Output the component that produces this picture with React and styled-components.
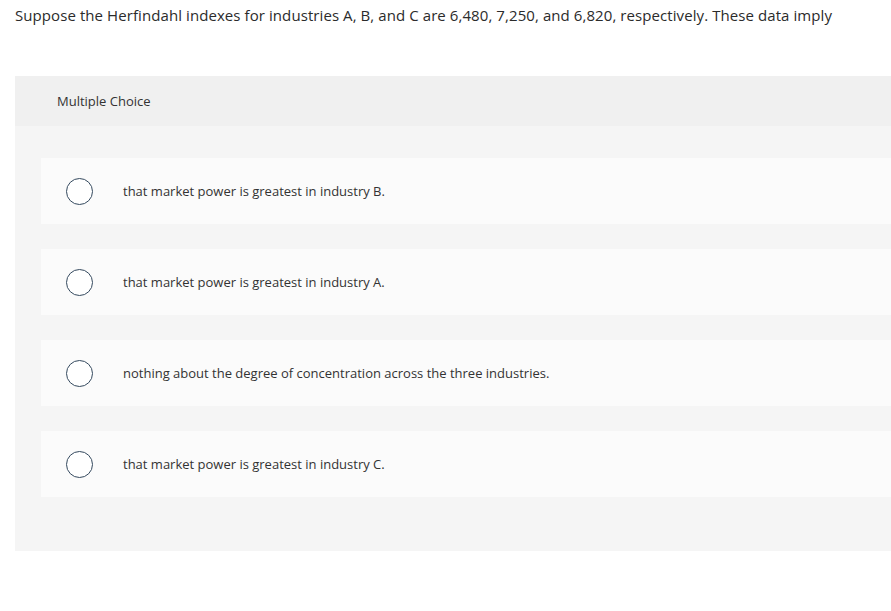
import React from "react";
import styled, { createGlobalStyle } from "styled-components";

const Global = createGlobalStyle`
  html, body { margin: 0; padding: 0; background: #fff; }
  body { font-family: "Open Sans", "Liberation Sans", sans-serif; color: #333; }
`;

const Page = styled.div`
  width: 891px;
  padding: 5px 0 0 15px;
  box-sizing: border-box;
`;

const Question = styled.p`
  margin: 0;
  font-size: 15px;
  line-height: 20px;
  letter-spacing: 0.08px;
  color: #2b2b2b;
`;

const Panel = styled.section`
  margin-top: 51px;
  background: #f5f5f5;
  padding-bottom: 54px;
`;

const Header = styled.div`
  height: 50px;
  background: #f0f0f0;
  display: flex;
  align-items: center;
  padding-left: 42px;
  font-size: 13px;
  color: #333;
`;

const List = styled.div`
  display: flex;
  flex-direction: column;
  gap: 25px;
  padding: 32px 0 0 26px;
`;

const Option = styled.label`
  height: 66px;
  background: #fbfbfb;
  display: flex;
  align-items: center;
  padding-left: 25px;
  cursor: pointer;
`;

const Radio = styled.span`
  width: 25px;
  height: 25px;
  border: 1.5px solid #34495e;
  border-radius: 50%;
  background: #fff;
  flex: none;
`;

const OptionText = styled.span`
  margin-left: 30px;
  font-size: 13px;
  color: #333;
`;

const options = [
  "that market power is greatest in industry B.",
  "that market power is greatest in industry A.",
  "nothing about the degree of concentration across the three industries.",
  "that market power is greatest in industry C.",
];

export default function App() {
  return (
    <>
      <Global />
      <Page>
        <Question>
          Suppose the Herfindahl indexes for industries A, B, and C are 6,480, 7,250, and 6,820, respectively. These data imply
        </Question>
        <Panel>
          <Header>Multiple Choice</Header>
          <List>
            {options.map((o) => (
              <Option key={o}>
                <Radio />
                <OptionText>{o}</OptionText>
              </Option>
            ))}
          </List>
        </Panel>
      </Page>
    </>
  );
}
